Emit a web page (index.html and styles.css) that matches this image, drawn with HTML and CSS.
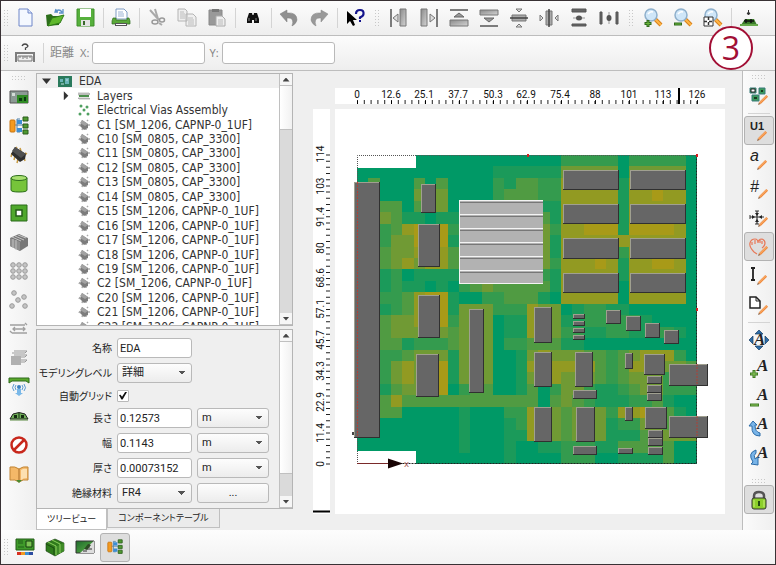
FILE: index.html
```html
<!DOCTYPE html>
<html lang="ja">
<head>
<meta charset="utf-8">
<title>EDA</title>
<link rel="stylesheet" href="styles.css">
</head>
<body>
<svg class="defs" aria-hidden="true">
  <defs>
    <linearGradient id="gGrey" x1="0" x2="1" y1="0" y2="1"><stop offset="0" stop-color="#8a8a8a"/><stop offset="1" stop-color="#d4d4d4"/></linearGradient>
    <linearGradient id="gGreen" x1="0" x2="1" y1="0" y2="1"><stop offset="0" stop-color="#1f6b2c"/><stop offset="1" stop-color="#5fb548"/></linearGradient>
    <symbol id="chip" viewBox="0 0 12 12"><path d="M2 5l-1 2M5 8l-1 3M8 10v1M9 1l1 1M11 5v2" stroke="#aaa" stroke-width="1.500"/><path d="M4 1l6 4v4l-4 2-4-4z" fill="#7c7c7c"/><path d="M4 1l6 4-3 2-5-3z" fill="#a2a2a2"/></symbol>
    <symbol id="pencil" viewBox="0 0 12 12"><path d="M0 12l1-3 2 2z" fill="#9a7050"/><path d="M1 9l8-8 2 2-8 8z" fill="#f08a3c"/><path d="M2 9.500l7.500-7.500" stroke="#ffc890" stroke-width=".8"/></symbol>
    <symbol id="lens" viewBox="0 0 20 20"><path d="M12 11l6 6" stroke="#d8801c" stroke-width="4"/><path d="M12 11l6 6" stroke="#ffb545" stroke-width="2"/><circle cx="8" cy="7" r="6" fill="#cfe6f8" stroke="#8fb0cc" stroke-width="1.500"/><path d="M5 6q2-3 5-2" stroke="#fff" stroke-width="1.500" fill="none"/></symbol>
    <symbol id="tree" viewBox="0 0 20 20"><path d="M5 9h3M8 3v13M8 3h3M8 9h9M8 16h3M14 3h5M14 16h5" stroke="#4b7fa8" fill="none"/><rect x="1" y="4" width="5" height="12" rx="1" fill="#f49a20" stroke="#c87410"/><path d="M8 4h5v4H8zM8 12h5v4H8z" fill="#3c8ed4"/><path d="M14 1h5v4h-5zM14 8h5v4h-5zM14 14h5v4h-5z" fill="#4f9a30" stroke="#2b5c1c"/></symbol>
  </defs>
</svg>

<div class="app">
  <header class="toolbars">
    <div class="toolbar" role="toolbar">
      <span class="grip grip-lead"></span>
      <button class="tool" aria-label="New"><svg viewBox="0 0 20 20"><path d="M4 1h9l4 4v13H4z" fill="#f4f8ff" stroke="#6f86c8"/><path d="M13 1v4h4" fill="#dce6fb" stroke="#6f86c8"/></svg></button>
      <button class="tool" aria-label="Open"><svg viewBox="0 0 20 20"><path d="M2 18L1 7l5-1 2 2h6v9z" fill="#2c6e1a"/><path d="M3 18l4-8 12-3-4 8z" fill="#5fb82c" stroke="#2e7a18"/><path d="M10 4q4-4 7 0M11 1l-1 3h3M18 1v4h-4" stroke="#5b8fc8" stroke-width="1.300" fill="none"/></svg></button>
      <button class="tool" aria-label="Save"><svg viewBox="0 0 20 20"><path d="M2 1h17v17H2z" fill="#56b03c" stroke="#3f8f2a"/><path d="M5 1h11v8H5z" fill="#fff"/><path d="M6 12h9v6H6z" fill="#e4e4e4"/><path d="M8 13h2v4H8z" fill="#3a6a2c"/></svg></button>
      <span class="sep"></span>
      <button class="tool" aria-label="Print"><svg viewBox="0 0 20 20"><path d="M5 1h8l3 3v7H5z" fill="#fff" stroke="#7f9cc4"/><path d="M7 4h5M7 6h6M7 8h6" stroke="#9ab2d4"/><path d="M2 10h3v2h11v-2h2l1 3v3H1v-3z" fill="#5aa83a" stroke="#2f6f20" stroke-width=".7"/><path d="M4 15h12v3H4z" fill="#555"/><path d="M5 16h10v1H5z" fill="#fff"/></svg></button>
      <span class="sep"></span>
      <button class="tool" aria-label="Cut"><svg viewBox="0 0 20 20"><path d="M3 2l9 10M8 1l3 10" stroke="#aaa" stroke-width="2" fill="none"/><ellipse cx="8" cy="14" rx="3" ry="2" fill="none" stroke="#999" stroke-width="1.500"/><ellipse cx="15" cy="12" rx="2.500" ry="2" fill="none" stroke="#999" stroke-width="1.500"/><path d="M12 15l3 2" stroke="#aaa" stroke-width="2"/></svg></button>
      <button class="tool" aria-label="Copy"><svg viewBox="0 0 20 20"><path d="M1 1h7l2 2v10H1zM9 6h7l3 3v9H9z" fill="#efefef" stroke="#b4b4b4"/><path d="M3 4h4M3 6h5M3 8h5M3 10h5M11 10h5M11 12h6M11 14h6M11 16h6" stroke="#bcbcbc"/></svg></button>
      <button class="tool" aria-label="Paste"><svg viewBox="0 0 20 20"><path d="M2 2h13v15H2z" fill="#999" stroke="#888"/><path d="M5 1h7v3H5z" fill="#777"/><path d="M9 8h6l3 3v7H9z" fill="#eee" stroke="#aaa"/><path d="M11 12h5M11 14h5M11 16h5" stroke="#bbb"/></svg></button>
      <span class="sep"></span>
      <button class="tool" aria-label="Find"><svg viewBox="0 0 20 20"><path d="M6 5h3l.5 2h1l.5-2h3l2 6v4h-5v-3h-2v3H4v-4z" fill="#111"/><path d="M6 10v3M13 10v3" stroke="#888"/></svg></button>
      <span class="sep"></span>
      <button class="tool" aria-label="Undo"><svg viewBox="0 0 20 20"><path d="M1 6l7-4v3q10-1 10 7-1 4-5 6 3-9-5-8v4z" fill="#8f8f8f" stroke="#7c7c7c" stroke-width=".5"/></svg></button>
      <button class="tool" aria-label="Redo"><svg viewBox="0 0 20 20"><path d="M19 6l-7-4v3Q2 4 2 12q1 4 5 6-3-9 5-8v4z" fill="#999" stroke="#858585" stroke-width=".5"/></svg></button>
      <span class="sep"></span>
      <button class="tool" aria-label="Help"><svg viewBox="0 0 20 20"><path d="M2 3v13l3-3 3 5 2-1-2-5h4z" fill="#000"/><path d="M11 6q0-4 4-4t3.500 4q0 2-3.500 3.500V11" stroke="#14148c" stroke-width="2.200" fill="none"/><path d="M14 12h2v2h-2z" fill="#14148c"/></svg></button>
      <span class="grip"></span>
      <button class="tool" aria-label="Align left"><svg viewBox="0 0 20 20"><path d="M2 1v18" stroke="#555" stroke-width="1.500"/><path d="M4 10l5-4v8z" fill="#ddd" stroke="#777"/><path d="M11 1h6v17h-6z" fill="url(#gGrey)" stroke="#777"/></svg></button>
      <button class="tool" aria-label="Align right"><svg viewBox="0 0 20 20"><path d="M18 1v18" stroke="#555" stroke-width="1.500"/><path d="M16 10l-5-4v8z" fill="#ddd" stroke="#777"/><path d="M2 1h6v17H2z" fill="url(#gGrey)" stroke="#777"/></svg></button>
      <button class="tool" aria-label="Align top"><svg viewBox="0 0 20 20"><path d="M1 2h18" stroke="#555" stroke-width="1.500"/><path d="M10 5l5 4H5z" fill="#999" stroke="#666"/><path d="M1 12h18v6H1z" fill="url(#gGrey)" stroke="#777"/></svg></button>
      <button class="tool" aria-label="Align bottom"><svg viewBox="0 0 20 20"><path d="M1 18h18" stroke="#555" stroke-width="1.500"/><path d="M10 14l5-4H5z" fill="#999" stroke="#666"/><path d="M1 2h18v5H1z" fill="url(#gGrey)" stroke="#777"/></svg></button>
      <button class="tool" aria-label="Align middle"><svg viewBox="0 0 20 20"><path d="M3 7h14v6H3z" fill="#aaa" stroke="#777"/><path d="M1 10h18" stroke="#444" stroke-width="1.500"/><path d="M7 1h6l-3 3zM7 19h6l-3-3z" fill="#ddd" stroke="#777"/></svg></button>
      <button class="tool" aria-label="Align center"><svg viewBox="0 0 20 20"><path d="M7 3h6v14H7z" fill="#aaa" stroke="#777"/><path d="M10 1v18" stroke="#444" stroke-width="1.500"/><path d="M1 7v6l3-3zM19 7v6l-3-3z" fill="#ddd" stroke="#777"/></svg></button>
      <button class="tool" aria-label="Distribute vertically"><svg viewBox="0 0 20 20"><path d="M3 1h14v3H3zM3 16h14v2H3z" fill="#666" stroke="#555"/><path d="M4 10h12" stroke="#999"/><ellipse cx="10" cy="10" rx="3" ry="2.500" fill="#555"/></svg></button>
      <button class="tool" aria-label="Distribute horizontally"><svg viewBox="0 0 20 20"><path d="M1 4h2v12H1zM17 4h2v12h-2z" fill="#666" stroke="#555"/><path d="M10 4v12" stroke="#999"/><ellipse cx="10" cy="10" rx="2.500" ry="3" fill="#555"/></svg></button>
      <span class="grip"></span>
      <button class="tool" aria-label="Zoom in"><svg viewBox="0 0 20 20"><use href="#lens"/><path d="M5 12v7M1.500 15.500h7" stroke="#2f6a1c" stroke-width="3"/><path d="M5 13v5M2.500 15.500h5" stroke="#6db83c"/></svg></button>
      <button class="tool" aria-label="Zoom out"><svg viewBox="0 0 20 20"><use href="#lens"/><path d="M1 16h8" stroke="#2f6a1c" stroke-width="3"/><path d="M2 16h6" stroke="#6db83c"/></svg></button>
      <button class="tool" aria-label="Zoom to fit"><svg viewBox="0 0 20 20"><use href="#lens"/><path d="M1 9h9v9H1z" fill="#fff" stroke="#333"/><path d="M5.500 9v9M1 13.500h9" stroke="#333" stroke-width="1.500" stroke-dasharray="3 2"/></svg></button>
      <span class="sep"></span>
      <button class="tool" aria-label="Ground"><svg viewBox="0 0 20 20"><path d="M9.500 2v4M8 5l1.500 2L11 5z" stroke="#333" fill="#333"/><path d="M2 17l4-6h9l3 6z" fill="#3a7a2a"/><path d="M5 13h10M7 11v4M12 11v4" stroke="#111" stroke-width="1.500"/><path d="M1 17h18" stroke="#66a84a" stroke-width="2"/></svg></button>
    </div>
    <div class="toolbar toolbar-measure" role="toolbar">
      <span class="grip grip-lead"></span>
      <button class="tool" aria-label="Measure"><svg viewBox="0 0 20 20"><path d="M7 3q1-2 3-2t3 2q0 1-2.500 2v2" stroke="#444" stroke-width="1.300" fill="none"/><path d="M1 9v10M19 9v10M2 10h16" stroke="#555" stroke-width="1.500"/><path d="M3 13h14v5H3z" fill="#eee" stroke="#777"/><path d="M5 13v2M8 13v3M10 13v2M12 13v3M15 13v2" stroke="#777"/></svg></button>
      <span class="sep"></span>
      <span class="measure-title">距離</span>
      <label class="measure"><span>X:</span><input type="text"></label>
      <label class="measure"><span>Y:</span><input type="text"></label>
    </div>
    <span class="callout">3</span>
  </header>

  <main class="workspace">
    <nav class="side side-left">
      <span class="grip-h"></span>
      <button class="tool" aria-label="Board"><svg viewBox="0 0 20 20"><path d="M1 4h18v12H1z" fill="#8b9a94" stroke="#555"/><path d="M8 8h11v8H8z" fill="#2f8a24"/><path d="M10 11h3v3h-3zM15 10h2v4h-2z" fill="#0b3a12"/><path d="M3 6h3v3H3z" fill="#d4dcd8"/></svg></button>
      <button class="tool" aria-label="Assembly"><svg viewBox="0 0 20 20"><use href="#tree"/></svg></button>
      <button class="tool" aria-label="Component"><svg viewBox="0 0 20 20"><path d="M3 8l-1 4M6 11l-1 4M9 14l-1 4M7 2l1 1M11 3l1 3M16 8l2 1M15 12l1 4" stroke="#c89a40" stroke-width="1.500"/><path d="M6 2l11 7-1 5-5 3-9-8z" fill="#2e2e2e"/><path d="M6 2l11 7-5 4L3 6z" fill="#505050"/></svg></button>
      <button class="tool" aria-label="Via"><svg viewBox="0 0 20 20"><path d="M2 4v12q0 2 8 2t8-2V4z" fill="#76c43a" stroke="#2d6f1c"/><ellipse cx="10" cy="4" rx="8" ry="2.500" fill="#a8e070" stroke="#2d6f1c"/></svg></button>
      <button class="tool" aria-label="Cutout"><svg viewBox="0 0 20 20"><path d="M2 2h16v16H2z" fill="#4fa82c" stroke="#2a6a1a"/><path d="M7 7h6v6H7z" fill="#fff" stroke="#245c18" stroke-width="1.500"/></svg></button>
      <button class="tool" aria-label="Heat sink"><svg viewBox="0 0 20 20"><path d="M1 6l9-4 9 4v8l-8 5-10-5z" fill="#777"/><path d="M1 6l10 4v9L1 14z" fill="#8f8f8f"/><path d="M3 5l9 4M6 4l9 4M9 3l8 3M4 7v9M7 8v10" stroke="#c4c4c4"/></svg></button>
      <button class="tool" aria-label="Array"><svg viewBox="0 0 20 20"><g fill="#c4c4c4" stroke="#9a9a9a"><circle cx="4" cy="4" r="2.300"/><circle cx="10" cy="4" r="2.300"/><circle cx="16" cy="4" r="2.300"/><circle cx="4" cy="10" r="2.300"/><circle cx="10" cy="10" r="2.300"/><circle cx="16" cy="10" r="2.300"/><circle cx="4" cy="16" r="2.300"/><circle cx="10" cy="16" r="2.300"/><circle cx="16" cy="16" r="2.300"/></g></svg></button>
      <button class="tool" aria-label="Points"><svg viewBox="0 0 20 20"><g fill="#c4c4c4" stroke="#9a9a9a"><circle cx="5" cy="3" r="2.300"/><circle cx="15" cy="7" r="2.300"/><circle cx="9" cy="10" r="2.300"/><circle cx="3" cy="16" r="2.300"/><circle cx="16" cy="16" r="2.300"/></g></svg></button>
      <button class="tool" aria-label="Trace"><svg viewBox="0 0 20 20"><path d="M1 6h15M3 14h15M4 10h12M6 8l-2 2 2 2M14 8l2 2-2 2M16 4l2 2M1 12l2 2" stroke="#a0a0a0" stroke-width="1.300" fill="none"/></svg></button>
      <button class="tool" aria-label="Layers"><svg viewBox="0 0 20 20"><path d="M2 8h10v9H2z" fill="#b0b0b0"/><path d="M5 3h13l-2 2H3M5 7h13l-2 2h-4M12 12h6l-2 2h-4" stroke="#999" fill="none"/></svg></button>
      <button class="tool" aria-label="Radiation"><svg viewBox="0 0 20 20"><path d="M0 6V1h20v5l-3-2H3z" fill="#5aa82c" stroke="#2e6a1c"/><path d="M5 7q-3 4 0 7M15 7q3 4 0 7M7 8q-2 2 0 5M13 8q2 2 0 5" stroke="#5a9ad0" fill="none"/><circle cx="10" cy="10" r="2" fill="#3a80c0"/><path d="M8 12h4v4h2l-4 3-4-3h2z" fill="#7ab8e8"/></svg></button>
      <button class="tool" aria-label="Potting"><svg viewBox="0 0 20 20"><path d="M1 13l3-5q6-3 12 0l3 5z" fill="#6fae58" stroke="#222"/><path d="M5 9h3v3H5zM12 9h3v3h-3z" fill="#142c10"/><path d="M10 7v5" stroke="#142c10"/><path d="M1 14h18" stroke="#5a8a40"/></svg></button>
      <button class="tool" aria-label="Forbidden"><svg viewBox="0 0 20 20"><circle cx="10" cy="10" r="7.500" fill="#fff" stroke="#c8281c" stroke-width="2.500"/><path d="M5 15L15 5" stroke="#c8281c" stroke-width="2.500"/></svg></button>
      <button class="tool" aria-label="Library"><svg viewBox="0 0 20 20"><path d="M1 3q5-1 9 2 4-3 9-2v13q-5-1-9 2-4-3-9-2z" fill="#f4b868" stroke="#c08434"/><path d="M10 5v13" stroke="#a86c28"/><path d="M12 6q3-2 6-1v9q-4 0-6 2z" fill="#fde0b0"/><path d="M7 16h6l-3 3z" fill="#4a8a30"/></svg></button>
    </nav>

    <section class="dock">
      <div class="pane pane-tree">
        <ul class="tree">
          <li class="root"><i class="arrow arrow-down"></i><svg class="root-icon" viewBox="0 0 14 11"><path d="M0 0h14v11H0z" fill="#2a7a5c"/><path d="M2 3h3v3H2zM7 2h4v6H7z" fill="#6ab4b8"/><path d="M3 8h3M8 4h2" stroke="#bfe0e0"/></svg>EDA</li>
          <li class="branch"><i class="arrow arrow-right"></i><svg viewBox="0 0 12 12"><path d="M0 3h11l1 1-1 1H0M0 8h11l1 1H1z" stroke="#999" fill="#ccc" stroke-width=".6"/><path d="M1 5h10v2H1z" fill="#4c8f4c"/></svg>Layers</li>
          <li><svg viewBox="0 0 12 12"><g fill="#4fa060"><circle cx="3" cy="2" r="1.500"/><circle cx="9" cy="3" r="1.500"/><circle cx="6" cy="6" r="1.500"/><circle cx="2" cy="10" r="1.500"/><circle cx="10" cy="10" r="1.500"/></g></svg>Electrical Vias Assembly</li>
          <li><svg><use href="#chip"/></svg>C1 [SM_1206, CAPNP-0_1UF]</li>
          <li><svg><use href="#chip"/></svg>C10 [SM_0805, CAP_3300]</li>
          <li><svg><use href="#chip"/></svg>C11 [SM_0805, CAP_3300]</li>
          <li><svg><use href="#chip"/></svg>C12 [SM_0805, CAP_3300]</li>
          <li><svg><use href="#chip"/></svg>C13 [SM_0805, CAP_3300]</li>
          <li><svg><use href="#chip"/></svg>C14 [SM_0805, CAP_3300]</li>
          <li><svg><use href="#chip"/></svg>C15 [SM_1206, CAPNP-0_1UF]</li>
          <li><svg><use href="#chip"/></svg>C16 [SM_1206, CAPNP-0_1UF]</li>
          <li><svg><use href="#chip"/></svg>C17 [SM_1206, CAPNP-0_1UF]</li>
          <li><svg><use href="#chip"/></svg>C18 [SM_1206, CAPNP-0_1UF]</li>
          <li><svg><use href="#chip"/></svg>C19 [SM_1206, CAPNP-0_1UF]</li>
          <li><svg><use href="#chip"/></svg>C2 [SM_1206, CAPNP-0_1UF]</li>
          <li><svg><use href="#chip"/></svg>C20 [SM_1206, CAPNP-0_1UF]</li>
          <li><svg><use href="#chip"/></svg>C21 [SM_1206, CAPNP-0_1UF]</li>
          <li><svg><use href="#chip"/></svg>C22 [SM_1206, CAPNP-0_1UF]</li>
        </ul>
        <div class="scroll"><i class="scroll-btn up"></i><i class="thumb thumb-tree"></i><i class="scroll-btn down"></i></div>
      </div>
      <div class="pane pane-props">
        <form class="props">
          <label for="name">名称</label><input id="name" type="text" value="EDA">
          <label for="level">モデリングレベル</label><select id="level"><option>詳細</option></select>
          <label for="grid">自動グリッド</label><input id="grid" type="checkbox" checked>
          <label for="len">長さ</label><input id="len" type="text" value="0.12573"><select aria-label="長さ"><option>m</option></select>
          <label for="wid">幅</label><input id="wid" type="text" value="0.1143"><select aria-label="幅"><option>m</option></select>
          <label for="thk">厚さ</label><input id="thk" type="text" value="0.00073152"><select aria-label="厚さ"><option>m</option></select>
          <label for="mat">絶縁材料</label><select id="mat"><option>FR4</option></select><button type="button" class="more">...</button>
        </form>
        <div class="scroll"><i class="scroll-btn up"></i><i class="thumb thumb-props"></i><i class="scroll-btn down"></i></div>
      </div>
      <div class="tabs" role="tablist">
        <button class="tab tab-on" role="tab">ツリービュー</button>
        <button class="tab" role="tab">コンポーネントテーブル</button>
      </div>
    </section>

    <section class="viewer">
      <svg class="ruler ruler-top" viewBox="335 88 390 16">
        <path d="M357 102h341" stroke="#222" stroke-width="4" stroke-dasharray="1 5.800"/>
        <path d="M357.500 101v3M391.500 101v3M425.400 101v3M459.300 101v3M493.300 101v3M527.200 101v3M561.200 101v3M595 101v3M629 101v3M663 101v3M697 101v3" stroke="#000"/>
        <path d="M679 88v16" stroke="#000" stroke-width="2"/>
        <g class="ticks"><text x="357" y="98">0</text><text x="391" y="98">12.6</text><text x="424" y="98">25.1</text><text x="458" y="98">37.7</text><text x="493" y="98">50.3</text><text x="526" y="98">62.9</text><text x="560" y="98">75.4</text><text x="595" y="98">88</text><text x="629" y="98">101</text><text x="663" y="98">113</text><text x="697" y="98">126</text></g>
      </svg>
      <svg class="ruler ruler-left" viewBox="313 109 17 405">
        <path d="M328 464.500V154" stroke="#222" stroke-width="4" stroke-dasharray="1 5.180"/>
        <path d="M313 511.500h17" stroke="#000" stroke-width="2"/>
        <g class="ticks"><text transform="translate(324 464) rotate(-90)">0</text><text transform="translate(324 433) rotate(-90)">11.4</text><text transform="translate(324 402) rotate(-90)">22.9</text><text transform="translate(324 371) rotate(-90)">34.3</text><text transform="translate(324 340) rotate(-90)">45.7</text><text transform="translate(324 309) rotate(-90)">57.1</text><text transform="translate(324 278) rotate(-90)">68.6</text><text transform="translate(324 248) rotate(-90)">80</text><text transform="translate(324 217) rotate(-90)">91.4</text><text transform="translate(324 186) rotate(-90)">103</text><text transform="translate(324 154) rotate(-90)">114</text></g>
      </svg>
      <svg class="canvas" viewBox="335 109 390 405">
        <g id="copper" shape-rendering="crispEdges"></g>
        <path d="M357 155h59v13h-59zM357 451h59v13h-59z" fill="#fff"/>
        <path d="M357.500 464V155.500h340" fill="none" stroke="#555" stroke-dasharray="1 1"/>
        <path d="M357.500 463.500h339V155" fill="none" stroke="#222" stroke-dasharray="2 1"/>
        <g id="parts" shape-rendering="crispEdges"></g>
        <path d="M357.500 182v255M697 364v21M697 416v21" stroke="#c0392b" stroke-width=".8" stroke-dasharray="2 1"/>
        <path d="M357 463.500h32" stroke="#7a2a2a"/>
        <path d="M388 458.500l15 5-15 5z" fill="#180404"/>
        <text class="axis" x="404" y="467">X</text>
        <path d="M527 154h2v3h-2zM696 154h2v3h-2zM696 308h2v3h-2z" fill="#d42020"/>
        <path d="M352 432h2v3h-2z" fill="#444"/>
      </svg>
    </section>

    <nav class="side side-right">
      <span class="grip-h"></span>
      <button class="tool" aria-label="Edit board"><svg viewBox="0 0 20 20"><path d="M1 2h6v5H1zM10 2h6v6h-6zM3 9h7v6H3z" fill="#3c9a5c" stroke="#3a7a7a"/><path d="M2 3h4v3H2z" fill="#fff" stroke="#222"/><path d="M5 11h3v2H5zM12 4h2v2h-2z" fill="#183c20"/><use href="#pencil" x="9" y="8" width="11" height="11"/></svg></button>
      <span class="sep-h"></span>
      <button class="tool pressed label-tool" aria-label="Reference names"><svg viewBox="0 0 20 20"><text class="ref" x="1" y="9">U1</text><use href="#pencil" x="8" y="9" width="11" height="11"/></svg></button>
      <button class="tool label-tool" aria-label="Text"><svg viewBox="0 0 20 20"><text class="alpha" x="1" y="11">a</text><use href="#pencil" x="8" y="9" width="11" height="11"/></svg></button>
      <button class="tool label-tool" aria-label="Numbers"><svg viewBox="0 0 20 20"><text class="alpha" x="1" y="13">#</text><use href="#pencil" x="9" y="9" width="11" height="11"/></svg></button>
      <button class="tool" aria-label="Move"><svg viewBox="0 0 20 20"><path d="M8 3v13M1 9h14" stroke="#333" stroke-width="1.200"/><path d="M6 3h4M6 16h4M1 7v4" stroke="#333"/><path d="M6 5h4l-2 3zM6 14h4l-2-3zM3 7v4l3-2zM13 7v4l-3-2z" fill="#222"/><use href="#pencil" x="9" y="8" width="11" height="11"/></svg></button>
      <button class="tool pressed" aria-label="Traces"><svg viewBox="0 0 20 20"><path d="M5 15Q0 10 1 6q1-4 5-4 3 0 3 4 0-4 4-4 3 1 3 4 0 3-3 5M5 15l3 2M3 8V5M6 7V3M11 6V3M13 7V4" stroke="#e87858" stroke-width="1.200" fill="none"/><use href="#pencil" x="9" y="8" width="11" height="11"/></svg></button>
      <button class="tool" aria-label="Height"><svg viewBox="0 0 20 20"><path d="M4 3v11M2 2h4M2 14h4" stroke="#222" stroke-width="1.800"/><use href="#pencil" x="8" y="8" width="11" height="11"/></svg></button>
      <button class="tool" aria-label="Sheet"><svg viewBox="0 0 20 20"><path d="M1 2h6l4 4v7H1z" fill="#fff" stroke="#222" stroke-width="1.500"/><path d="M7 2v4h4" fill="none" stroke="#222"/><use href="#pencil" x="9" y="9" width="11" height="11"/></svg></button>
      <span class="sep-h"></span>
      <button class="tool label-tool" aria-label="Move label"><svg viewBox="0 0 20 20"><path d="M10 0l4 4H6zM10 20l4-4H6zM0 10l4-4v8zM20 10l-4-4v8z" fill="#2d6ca8" stroke="#173c60" stroke-width=".7"/><text class="face" x="5" y="15">A</text></svg></button>
      <button class="tool label-tool" aria-label="Larger label"><svg viewBox="0 0 20 20"><text class="face" x="8" y="12">A</text><path d="M5 11v8M1 15h8" stroke="#3f7a24" stroke-width="3"/><path d="M5 12v6M2 15h6" stroke="#8cc85c"/></svg></button>
      <button class="tool label-tool" aria-label="Smaller label"><svg viewBox="0 0 20 20"><text class="face" x="8" y="12">A</text><path d="M1 17h9" stroke="#3f7a24" stroke-width="3"/><path d="M2 17h7" stroke="#8cc85c"/></svg></button>
      <button class="tool label-tool" aria-label="Rotate label left"><svg viewBox="0 0 20 20"><text class="face" x="8" y="12">A</text><path d="M0 9l4-5 4 4H6q0 7 5 8v3Q2 19 3 9z" fill="#78b4e8" stroke="#2d6ca8"/></svg></button>
      <button class="tool label-tool" aria-label="Rotate label right"><svg viewBox="0 0 20 20"><text class="face" x="8" y="12">A</text><path d="M7 4v3q-3 2-1 6l3-2v8l-7-1 2-2Q-2 7 7 4z" fill="#78b4e8" stroke="#2d6ca8"/></svg></button>
      <span class="grip-h grip-low"></span>
      <button class="tool pressed" aria-label="Lock"><svg viewBox="0 0 20 20"><path d="M5 9V6q0-4 5-4t5 4v3" fill="none" stroke="#555" stroke-width="2.500"/><rect x="3" y="8" width="14" height="11" rx="2" fill="#8ccf2c" stroke="#333"/><path d="M9 11h2v5H9z" fill="#234a10"/><path d="M5 10v7M15 10v7" stroke="#c8f078"/></svg></button>
    </nav>
  </main>

  <footer class="toolbar toolbar-bottom" role="toolbar">
    <span class="grip grip-lead"></span>
    <button class="tool" aria-label="Board view"><svg viewBox="0 0 20 20"><path d="M1 2h18v11H1z" fill="#3f9a2a" stroke="#245c18"/><path d="M11 4h6v6h-6z" fill="#7cc454" stroke="#173c10"/><path d="M3 4h5M3 6h5M3 10h6" stroke="#206018"/><path d="M2 15h4v3H2z" fill="#d83020"/><path d="M6 15h4v3H6z" fill="#f09a20"/><path d="M10 15h4v3h-4z" fill="#3c8ed4"/><path d="M14 15h4v3h-4z" fill="#2c4ca0"/></svg></button>
    <button class="tool" aria-label="Solid view"><svg viewBox="0 0 20 20"><path d="M1 6l9-4 9 4v8l-9 5-9-5z" fill="#2f7a1c" stroke="#173c10" stroke-width=".6"/><path d="M10 10l9-4v8l-9 5z" fill="#3f8a28"/><path d="M3 5l8 4v9M7 3l8 4v9" stroke="#8cd05c" fill="none"/><path d="M1 7l8 4v7" stroke="#1a4a10" fill="none"/></svg></button>
    <button class="tool" aria-label="Drawing view"><svg viewBox="0 0 20 20"><path d="M1 4h18v12H1z" fill="url(#gGreen)" stroke="#333"/><path d="M19 4v12H5z" fill="#ddd"/><path d="M8 14h4M14 7v4M12 12h5" stroke="#333"/><path d="M9 12l4-5 3 1-4 5z" fill="#2c4c24"/></svg></button>
    <button class="tool pressed" aria-label="Tree view"><svg class="small" viewBox="0 0 20 20"><use href="#tree"/></svg></button>
  </footer>
</div>
<script src="board.js"></script>
</body>
</html>
```
FILE: styles.css
```css
* { box-sizing: border-box; }

body {
  margin: 0;
  font: 12px/14px "Noto Sans", "Noto Sans CJK JP", sans-serif;
  color: #333;
  background: #efefef;
}

.defs { position: absolute; width: 0; height: 0; }

.app {
  display: flex;
  flex-direction: column;
  min-height: 100vh;
  border: 1px solid #393235;
}

button { font: inherit; color: inherit; }

/* Toolbars */
.toolbars { position: relative; }

.toolbar {
  display: flex;
  align-items: center;
  height: 35px;
  background: linear-gradient(#fcfcfc, #eeeeee);
  border-bottom: 1px solid #bdbdbd;
}

.tool {
  flex: none;
  display: grid;
  place-items: center;
  width: 30px;
  height: 29px;
  padding: 0;
  border: 1px solid transparent;
  border-radius: 3px;
  background: none;
}

.tool svg { width: 20px; height: 20px; overflow: visible; }
.tool svg.small { width: 16px; height: 16px; }
.pressed { background: #dedede; border-color: #b2b2b2; }

.grip {
  flex: none;
  width: 14px;
  height: 18px;
  background: radial-gradient(circle, #c8c8c8 1px, transparent 1px) 0 0 / 3px 3px content-box;
  padding: 0 4px;
}
.grip-lead { width: 9px; padding: 0 2px; }

.sep { flex: none; width: 6px; height: 20px; border-left: 1px solid #d4d4d4; margin-left: 3px; margin-right: -3px; }

.toolbar-measure { color: #888; }
.measure-title { padding: 0 6px 0 4px; }
.measure { display: flex; align-items: center; gap: 3px; margin-right: 4px; font-size: 11px; }

input, select, .more {
  font: 11px/14px "Roboto", "Noto Sans CJK JP", sans-serif;
  color: #222;
  border: 1px solid #b9b9b9;
  border-radius: 3px;
  background: #fff;
  margin: 0;
}
.measure input { width: 113px; height: 22px; }

.callout {
  position: absolute;
  top: 25px;
  right: 22px;
  width: 44px;
  height: 44px;
  border: 2px solid #a20f35;
  border-radius: 50%;
  background: #fff;
  color: #a20f35;
  font: 500 32px/39px "Open Sans", sans-serif;
  text-align: center;
}

/* Workspace */
.workspace {
  flex: 1;
  display: grid;
  grid-template-columns: 35px 257px 1fr 33px;
}

.side { display: flex; flex-direction: column; align-items: center; background: linear-gradient(90deg, #fbfbfb, #efefef); }
.side-left { padding-top: 2px; }
.side-right { border-left: 1px solid #bdbdbd; padding-top: 1px; }
.grip-h {
  width: 16px;
  height: 9px;
  padding: 2px 0;
  background: radial-gradient(circle, #c8c8c8 1px, transparent 1px) 0 0 / 3px 3px content-box;
}
.grip-low { margin-top: 6px; }
.sep-h { width: 22px; height: 6px; border-top: 1px solid #d4d4d4; margin-top: 3px; margin-bottom: -3px; }

/* Dock */
.dock { padding-top: 2px; }
.pane { display: flex; border: 1px solid #b4b4b4; }
.pane-tree { height: 253px; background: #fff; overflow: hidden; }
.pane-props { height: 180px; margin-top: 3px; }

.tree {
  flex: 1;
  display: grid;
  grid-auto-rows: 1fr;
  height: 260px;
  margin: 0;
  padding: 0;
  list-style: none;
  font: 12px/14px "DejaVu Sans Condensed", "Noto Sans", sans-serif;
  white-space: nowrap;
}
.tree li { display: flex; align-items: center; gap: 7px; padding-left: 41px; }
.tree svg { flex: none; width: 12px; height: 12px; }
.tree .root { padding-left: 5px; background: #efefef; }
.tree .root .root-icon { width: 14px; height: 11px; }
.tree .branch { padding-left: 25px; }
.arrow { width: 9px; height: 9px; background: #333; }
.arrow-down { clip-path: polygon(0 20%, 100% 20%, 50% 80%); }
.arrow-right { clip-path: polygon(20% 0, 70% 50%, 20% 100%); }

.scroll {
  flex: none;
  display: flex;
  flex-direction: column;
  width: 13px;
  background: #dadada;
  border-left: 1px solid #c0c0c0;
}
.scroll-btn { display: grid; place-items: center; height: 12px; background: #f6f6f6; border-bottom: 1px solid #c0c0c0; }
.scroll-btn::before { content: ""; width: 7px; height: 4px; background: #444; clip-path: polygon(0 100%, 50% 0, 100% 100%); }
.down { margin-top: auto; }
.down::before { clip-path: polygon(0 0, 100% 0, 50% 100%); }
.thumb { background: linear-gradient(90deg, #fff, #f1f1f1); border-bottom: 1px solid #c0c0c0; }
.thumb-tree { height: 44px; }
.thumb-props { height: 132px; }

.props {
  flex: 1;
  display: grid;
  grid-template-columns: 75px 75px 72px;
  grid-template-rows: 20px 20px 15px 20px 20px 20px 20px;
  gap: 5px;
  align-items: center;
  padding-top: 8px;
}
.props label {
  grid-column: 1;
  text-align: right;
  white-space: nowrap;
  font: 10px/14px "Noto Sans CJK JP", sans-serif;
  font-feature-settings: "palt";
  color: #222;
}
.props input, .props select, .more { width: 100%; height: 20px; padding: 0 2px; }
.props select, .more { background: linear-gradient(#fdfdfd, #ececec); }
.props select {
  appearance: none;
  padding-left: 4px;
  background:
    linear-gradient(to bottom right, #555 50%, transparent 50%) right 5px center / 4px 4px no-repeat,
    linear-gradient(to bottom left, #555 50%, transparent 50%) right 9px center / 4px 4px no-repeat,
    linear-gradient(#fdfdfd, #ececec);
}
.props input[type="checkbox"] {
  appearance: none;
  display: grid;
  place-items: center;
  width: 12px;
  height: 12px;
  border-radius: 1px;
  padding: 0;
}
.props input[type="checkbox"]:checked::before {
  content: "";
  width: 8px;
  height: 8px;
  background: #111;
  clip-path: polygon(0 45%, 20% 40%, 38% 65%, 80% 0, 100% 5%, 45% 100%, 30% 100%);
}

.tabs { display: flex; align-items: flex-start; }
.tab {
  height: 19px;
  padding: 0 10px;
  border: 1px solid #c0c0c0;
  border-top: 0;
  background: #ebebeb;
  font: 9px/14px "Noto Sans CJK JP", sans-serif;
  font-feature-settings: "palt";
  color: #222;
  white-space: nowrap;
}
.tab-on { height: 21px; background: #fff; }

/* Board viewer */
.viewer {
  display: grid;
  grid-template-columns: 17fr 390fr;
  gap: 5px;
  align-content: start;
  padding: 17px 17px 16px 20px;
}
.ruler, .canvas { display: block; width: 100%; background: #fff; }
.ruler-top { grid-column: 2; }
.ticks { font: 10px "Roboto", sans-serif; text-anchor: middle; fill: #111; }
.axis { font: 8px "Roboto", sans-serif; fill: #a05050; }

.label-tool text { fill: #222; }
.ref { font: bold 11px "Liberation Sans", sans-serif; }
.alpha { font: italic 16px "Liberation Sans", sans-serif; }
.face { font: italic bold 17px "Liberation Serif", serif; }

.toolbar-bottom { height: 34px; border-bottom: 0; background: linear-gradient(#fdfdfd, #f2f2f2); }
```
FILE: board.js
```js
const NS = "http://www.w3.org/2000/svg";
const board = { x: 357, y: 155, w: 340, h: 309 };

// Copper density per cell, 0 (bare) to 6 (dense)
const shades = ["#009966", "#1b9a5a", "#349b4e", "#509b42", "#709a34", "#929a22", "#a89a18"];
const density = [
  "000000000000000000222220222220",
  "000000000000111111444440444440",
  "030003030000213322555551555550",
  "000004040000233322555551556550",
  "003303040000222211555551555550",
  "004311011000000031555551555550",
  "002356662000000042556661666650",
  "002446661000000041555555555550",
  "003445653000000041555552555550",
  "003454553000000042555651556650",
  "001201111111111121555551555550",
  "001211010234333331555550555550",
  "002235661002233310555550555550",
  "001235661444222544012211000000",
  "003445662444011544112222210000",
  "003444443444011544221122112210",
  "003312223444022333110000000000",
  "002234441444001454443323455520",
  "002454461444001555555323555443",
  "002454461444001445444323444243",
  "001344460233001302442112344222",
  "003533333333333303432111223100",
  "003300000100022544344425565310",
  "000000000100012544344412244300",
  "000000000100011544344411134444",
  "000000000100010011222113333300",
  "000000000000010000222001111300"
];

// Package outlines: x, y, width, height
const parts = [
  [354, 182, 25, 255], [421, 184, 14, 28], [418, 224, 21, 42], [418, 295, 21, 42],
  [416, 354, 22, 42], [469, 309, 14, 83],
  [563, 170, 55, 19], [563, 204, 55, 19], [563, 238, 55, 20], [563, 273, 55, 19],
  [630, 170, 55, 19], [630, 204, 55, 19], [630, 238, 55, 20], [630, 273, 55, 19],
  [534, 307, 17, 35], [534, 352, 17, 34], [534, 407, 17, 34],
  [575, 352, 17, 34], [576, 407, 18, 34],
  [573, 314, 11, 4], [573, 321, 11, 4], [573, 328, 11, 4], [573, 335, 11, 4],
  [573, 390, 23, 8], [573, 446, 23, 8],
  [606, 310, 14, 13], [626, 316, 14, 14], [645, 323, 14, 14], [664, 330, 14, 13],
  [625, 353, 7, 15], [644, 354, 20, 20], [647, 376, 14, 7], [647, 385, 14, 7], [647, 393, 14, 7],
  [669, 364, 38, 21], [669, 416, 38, 21],
  [625, 407, 7, 13], [645, 407, 21, 21], [648, 430, 14, 7], [648, 438, 14, 7], [648, 447, 14, 7],
  [618, 448, 14, 5]
];

function rect(parent, x, y, w, h, fill) {
  const r = document.createElementNS(NS, "rect");
  Object.entries({ x, y, width: w, height: h, fill }).forEach(([k, v]) => r.setAttribute(k, v));
  parent.append(r);
}

const copper = document.getElementById("copper");
density.forEach((row, j) => {
  const top = Math.round(board.y + j * board.h / density.length);
  const bottom = Math.round(board.y + (j + 1) * board.h / density.length);
  [...row].forEach((level, i) => {
    const left = Math.round(board.x + i * board.w / row.length);
    const right = Math.round(board.x + (i + 1) * board.w / row.length);
    rect(copper, left, top, right - left, bottom - top, shades[level]);
  });
});

const layer = document.getElementById("parts");
parts.forEach(([x, y, w, h]) => {
  rect(layer, x, y, w + 1, h + 1, "#303030");
  rect(layer, x, y, w, h, "#a0a090");
  rect(layer, x + 1, y + 1, w - 1, h - 1, "#666666");
});

// Heat sink fins
rect(layer, 459, 200, 84, 84, "#b2b2b2");
for (let i = 0; i < 6; i++) {
  rect(layer, 459, 200 + i * 14, 84, 1, "#f4f4f4");
  rect(layer, 459, 202 + i * 14, 84, 1, "#777777");
}
rect(layer, 459, 283, 84, 1, "#f4f4f4");
rect(layer, 459, 200, 1, 84, "#f4f4f4");
```
